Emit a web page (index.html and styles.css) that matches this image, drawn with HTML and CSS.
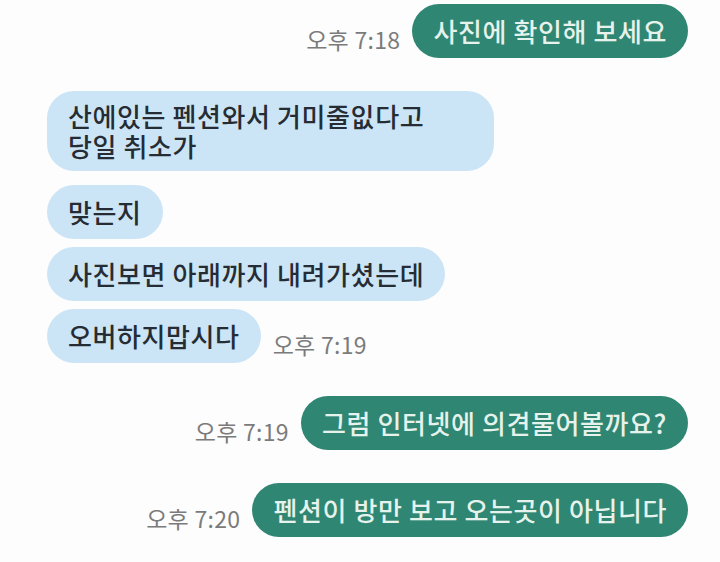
FILE: index.html
```html
<!DOCTYPE html>
<html>
  <head>
    <meta charset="utf-8">
    <title>채팅</title>
    <link rel="stylesheet" href="styles.css">
  </head>
  <body>
    <div class="chat">
      <div class="row sent first">
        <span class="time">오후 7:18</span>
        <div class="bubble out">사진에 확인해 보세요</div>
      </div>

      <div class="row recv group">
        <div class="bubble in multi">산에있는 펜션와서 거미줄잆다고<br>당일 취소가</div>
      </div>
      <div class="row recv gap-lg">
        <div class="bubble in">맞는지</div>
      </div>
      <div class="row recv">
        <div class="bubble in">사진보면 아래까지 내려가셨는데</div>
      </div>
      <div class="row recv">
        <div class="bubble in">오버하지맙시다</div>
        <span class="time">오후 7:19</span>
      </div>

      <div class="row sent group">
        <span class="time">오후 7:19</span>
        <div class="bubble out">그럼 인터넷에 의견물어볼까요?</div>
      </div>
      <div class="row sent group">
        <span class="time">오후 7:20</span>
        <div class="bubble out">펜션이 방만 보고 오는곳이 아닙니다</div>
      </div>
    </div>
  </body>
</html>
```

FILE: styles.css
```css
html {
  background-color: #fdfdfd;
}
body {
  margin: 0;
  font-family: "Noto Sans CJK KR", "Noto Sans", sans-serif;
}
.chat {
  display: flex;
  flex-direction: column;
  padding: 4px 32px 0 47px;
}
.row {
  display: flex;
  align-items: flex-end;
  gap: 12px;
  margin-top: 8px;
}
.row.first {
  margin-top: 0;
}
.row.group {
  margin-top: 33px;
}
.row.gap-lg {
  margin-top: 14px;
}
.sent {
  justify-content: flex-end;
}
.recv {
  justify-content: flex-start;
}

.bubble {
  font-size: 26px;
  font-weight: 500;
  line-height: 28px;
  letter-spacing: 0.6px;
  padding: 13px 21px;
  border-radius: 27px;
}
.bubble.multi {
  line-height: 30px;
  padding: 10px 70px 10px 21px;
}
.bubble.out {
  background-color: #2f8672;
  color: #e6f2ec;
}
.bubble.in {
  background-color: #cbe5f6;
  color: #262c33;
}

.time {
  font-size: 23px;
  line-height: 26px;
  letter-spacing: 0.3px;
  color: #7b7b7b;
  padding-bottom: 6px;
  white-space: nowrap;
}
```
